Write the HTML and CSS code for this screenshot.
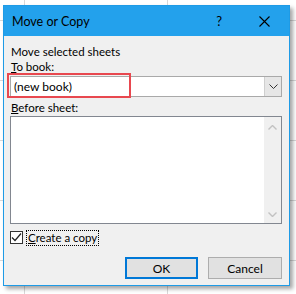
FILE: index.html
```html
<!DOCTYPE html>
<html lang="en">
<head>
  <meta charset="UTF-8" />
  <title>Move or Copy</title>
  <link rel="stylesheet" href="styles.css">
</head>
<body>

  <div class="dialog">
    <!-- Title bar -->
    <div class="titlebar">
      <span class="title">Move or Copy</span>
      <span class="help">?</span>
      <svg class="close" width="11" height="11" viewBox="0 0 11 11">
        <path d="M0.5 0.5 L10.5 10.5 M10.5 0.5 L0.5 10.5" stroke="#000" stroke-width="1.1" fill="none"/>
      </svg>
    </div>

    <div class="content">
      <div class="label">Move selected sheets</div>
      <div class="label"><u>T</u>o book:</div>

      <div class="combo">
        <div class="combo-text">(new book)</div>
        <div class="combo-btn">
          <svg width="9" height="5" viewBox="0 0 9 5">
            <path d="M0.5 0.5 L4.5 4.5 L8.5 0.5" stroke="#333" stroke-width="1" fill="none"/>
          </svg>
        </div>
        <div class="highlight"></div>
      </div>

      <div class="label before">
        <u>B</u>efore sheet:
      </div>

      <div class="listbox">
        <div class="list-area"></div>
        <div class="scrollbar">
          <svg width="9" height="5" viewBox="0 0 9 5">
            <path d="M0.5 4.5 L4.5 0.5 L8.5 4.5" stroke="#c2c2c2" stroke-width="1.4" fill="none"/>
          </svg>
          <svg width="9" height="5" viewBox="0 0 9 5">
            <path d="M0.5 0.5 L4.5 4.5 L8.5 0.5" stroke="#c2c2c2" stroke-width="1.4" fill="none"/>
          </svg>
        </div>
      </div>

      <div class="check-row">
        <div class="checkbox">
          <svg width="11" height="11" viewBox="0 0 11 11">
            <path d="M1 5.5 L4 8.5 L10 1.5" stroke="#222" stroke-width="1.2" fill="none"/>
          </svg>
        </div>
        <span class="check-label"><u>C</u>reate a copy</span>
      </div>

      <div class="buttons">
        <button class="btn default">OK</button>
        <button class="btn">Cancel</button>
      </div>
    </div>
  </div>

</body>
</html>
```

FILE: styles.css
```css
* {
  margin: 0;
  padding: 0;
  box-sizing: border-box;
}

body {
  width: 296px;
  height: 294px;
  overflow: hidden;
  font-family: 'Lato', 'Open Sans', sans-serif;
  font-size: 11.5px;
  color: #000;
  background-color: #fff;
  /* spreadsheet grid behind the dialog */
  background-image:
    linear-gradient(to right, #d8d8d8 1px, transparent 1px),
    linear-gradient(to bottom, #d8d8d8 1px, transparent 1px);
  background-size: 143px 100%, 100% 60px;
  background-position: 24px 0, 0 20px;
  padding: 5px 0 0 3px;
}

.dialog {
  width: 287px;
  height: 281px;
  border: 1px solid #1e9be6;
  background: #f0f0f0;
  box-shadow: 3px 3px 4px rgba(0, 0, 0, 0.35);
  display: flex;
  flex-direction: column;
}

/* Title bar */
.titlebar {
  height: 30px;
  background: #23a1ec;
  display: flex;
  align-items: center;
  padding-left: 8px;
  flex-shrink: 0;
}

.title {
  font-size: 12.5px;
  flex-grow: 1;
  padding-top: 1px;
}

.help {
  font-size: 13px;
  margin-right: 37px;
}

.close {
  margin-right: 19px;
}

/* Body */
.content {
  padding: 8px 6px 0 6px;
  flex-grow: 1;
  display: flex;
  flex-direction: column;
}

.label {
  line-height: 15px;
  padding-left: 1px;
}

u {
  text-decoration-thickness: 1px;
  text-underline-offset: 1px;
}

.combo {
  position: relative;
  margin-top: 2px;
  height: 21px;
  width: 272px;
  border: 1px solid #a9a9a9;
  background: #fff;
  display: flex;
}

.combo-text {
  flex-grow: 1;
  padding-left: 3px;
  line-height: 19px;
  font-size: 12px;
}

.combo-btn {
  width: 17px;
  background: #e6e6e6;
  border-left: 1px solid #cfcfcf;
  display: flex;
  align-items: center;
  justify-content: center;
}

/* red annotation box drawn over the combo */
.highlight {
  position: absolute;
  left: -4px;
  top: -4px;
  width: 124px;
  height: 25px;
  border: 2px solid #e8484f;
}

.before {
  margin-top: 3px;
}

.listbox {
  margin-top: 1px;
  width: 272px;
  height: 108px;
  border: 1px solid #828790;
  background: #fff;
  display: flex;
}

.list-area {
  flex-grow: 1;
}

.scrollbar {
  width: 17px;
  background: #f0f0f0;
  display: flex;
  flex-direction: column;
  justify-content: space-between;
  align-items: center;
  padding: 8px 0 6px 0;
}

.check-row {
  margin-top: 6px;
  display: flex;
  align-items: center;
  height: 15px;
}

.checkbox {
  width: 13px;
  height: 13px;
  border: 1px solid #333;
  background: #fff;
  display: flex;
  align-items: center;
  justify-content: center;
}

.check-label {
  margin-left: 4px;
  padding: 0 1px;
  line-height: 14px;
  outline: 1px dotted #000;
  outline-offset: 0;
}

.buttons {
  margin-top: 12px;
  display: flex;
  justify-content: flex-end;
  gap: 10px;
  padding-right: 1px;
}

.btn {
  width: 74px;
  height: 22px;
  font-family: inherit;
  font-size: 12px;
  background: #e1e1e1;
  border: 1px solid #adadad;
  color: #000;
}

.btn.default {
  width: 73px;
  border: 2px solid #0078d7;
}
```
